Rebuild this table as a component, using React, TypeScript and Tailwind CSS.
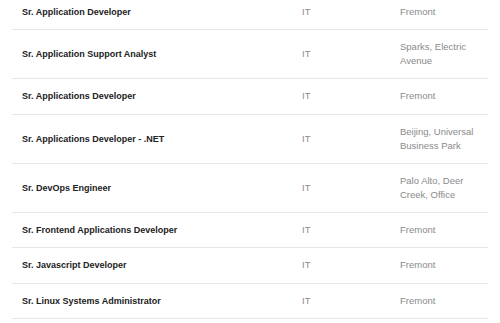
const JOBS = [
  { title: "Sr. Application Developer", dept: "IT", location: "Fremont" },
  { title: "Sr. Application Support Analyst", dept: "IT", location: "Sparks, Electric Avenue" },
  { title: "Sr. Applications Developer", dept: "IT", location: "Fremont" },
  { title: "Sr. Applications Developer - .NET", dept: "IT", location: "Beijing, Universal Business Park" },
  { title: "Sr. DevOps Engineer", dept: "IT", location: "Palo Alto, Deer Creek, Office" },
  { title: "Sr. Frontend Applications Developer", dept: "IT", location: "Fremont" },
  { title: "Sr. Javascript Developer", dept: "IT", location: "Fremont" },
  { title: "Sr. Linux Systems Administrator", dept: "IT", location: "Fremont" },
];

export default function App() {
  return (
    <div className="h-[323px] w-[500px] overflow-hidden bg-white font-['Liberation_Sans',Arial,sans-serif]">
      <div className="-mt-[5px] px-[12px]">
        {JOBS.map((job) => (
          <div
            key={job.title}
            className="grid grid-cols-[280px_98px_1fr] items-center border-b border-[#e6e6e6] text-[9.5px] leading-[14.15px]"
          >
            <div className="py-[10px] pl-[10px] text-[9px] font-bold text-[#222]">{job.title}</div>
            <div className="py-[10px] pl-[10px] text-[#8a8a8a]">{job.dept}</div>
            <div className="py-[10px] pl-[10px] pr-[10px] text-[#8a8a8a]">{job.location}</div>
          </div>
        ))}
      </div>
    </div>
  );
}
